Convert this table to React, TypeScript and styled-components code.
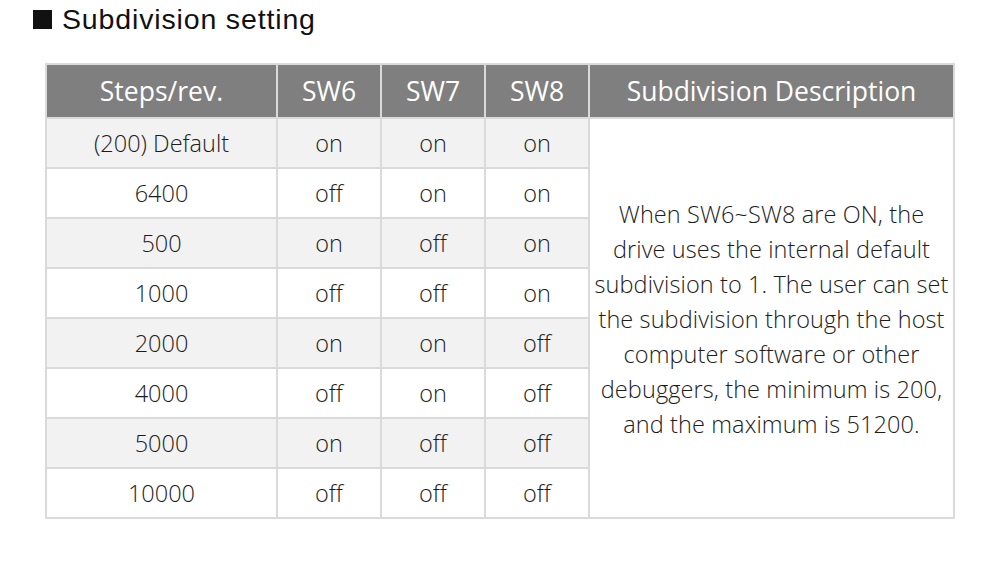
import React from "react";
import styled, { createGlobalStyle } from "styled-components";

const Global = createGlobalStyle`
  html, body { margin: 0; padding: 0; background: #fff; }
  body { width: 1000px; height: 581px; overflow: hidden; }
`;

const Page = styled.div`
  padding: 4px 0 0 33px;
  box-sizing: border-box;
`;

const Title = styled.h2`
  display: flex;
  align-items: center;
  gap: 10px;
  margin: 0;
  height: 30px;
  font-family: "Liberation Sans", Arial, sans-serif;
  font-weight: 400;
  font-size: 28.5px;
  letter-spacing: 0.85px;
  color: #111;
`;

const Square = styled.span`
  width: 19px;
  height: 19px;
  background: #111;
  flex: none;
`;

const Table = styled.table`
  margin: 29px 0 0 12px;
  border-collapse: collapse;
  table-layout: fixed;
  font-family: "Open Sans", "Noto Sans", sans-serif;
  border: 2px solid #dadada;
`;

const HeadCell = styled.th<{ $w: number }>`
  width: ${(p) => p.$w}px;
  height: 52px;
  padding: 0;
  background: #7f7f7f;
  color: #fff;
  font-weight: 400;
  font-size: 26.5px;
  text-align: center;
  white-space: nowrap;
  border: 2px solid #dadada;
`;

const Row = styled.tr<{ $alt: boolean }>`
  background: ${(p) => (p.$alt ? "#f2f2f2" : "#ffffff")};
`;

const Cell = styled.td`
  height: 48px;
  padding: 0;
  text-align: center;
  font-size: 23.5px;
  font-weight: 300;
  color: #1c1c1c;
  white-space: nowrap;
  border: 2px solid #dadada;
`;

const Desc = styled.td`
  background: #fff;
  padding: 2px 0 0;
  text-align: center;
  vertical-align: middle;
  font-size: 23.5px;
  font-weight: 300;
  line-height: 35px;
  letter-spacing: 0.1px;
  white-space: nowrap;
  color: #1c1c1c;
  border: 2px solid #dadada;
`;

const rows: [string, string, string, string][] = [
  ["(200) Default", "on", "on", "on"],
  ["6400", "off", "on", "on"],
  ["500", "on", "off", "on"],
  ["1000", "off", "off", "on"],
  ["2000", "on", "on", "off"],
  ["4000", "off", "on", "off"],
  ["5000", "on", "off", "off"],
  ["10000", "off", "off", "off"],
];

export default function App() {
  return (
    <>
      <Global />
      <Page>
        <Title>
          <Square />
          Subdivision setting
        </Title>
        <Table>
          <thead>
            <tr>
              <HeadCell $w={229}>Steps/rev.</HeadCell>
              <HeadCell $w={102}>SW6</HeadCell>
              <HeadCell $w={102}>SW7</HeadCell>
              <HeadCell $w={102}>SW8</HeadCell>
              <HeadCell $w={363}>Subdivision Description</HeadCell>
            </tr>
          </thead>
          <tbody>
            {rows.map((r, i) => (
              <Row key={r[0]} $alt={i % 2 === 0}>
                <Cell>{r[0]}</Cell>
                <Cell>{r[1]}</Cell>
                <Cell>{r[2]}</Cell>
                <Cell>{r[3]}</Cell>
                {i === 0 && (
                  <Desc rowSpan={rows.length}>
                    When SW6~SW8 are ON, the
                    <br />
                    drive uses the internal default
                    <br />
                    subdivision to 1. The user can set
                    <br />
                    the subdivision through the host
                    <br />
                    computer software or other
                    <br />
                    debuggers, the minimum is 200,
                    <br />
                    and the maximum is 51200.
                  </Desc>
                )}
              </Row>
            ))}
          </tbody>
        </Table>
      </Page>
    </>
  );
}
